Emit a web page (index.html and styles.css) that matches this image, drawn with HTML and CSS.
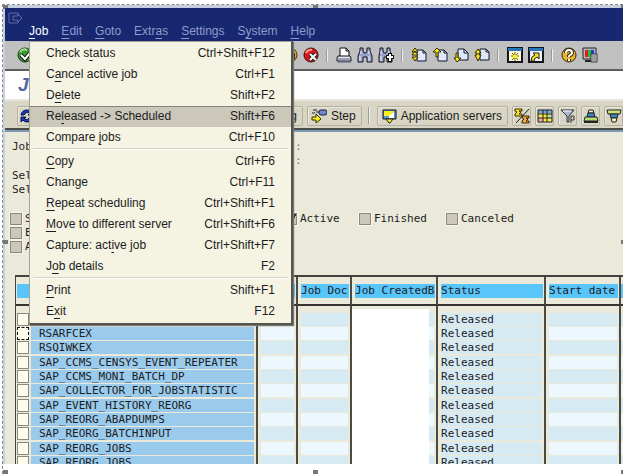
FILE: index.html
```
<!DOCTYPE html>
<html lang="en">
<head>
    <meta charset="utf-8">
    <title>Job Overview</title>
    <link rel="stylesheet" href="styles.css">
</head>
<body>
    <div class="window">
        <header class="titlebar">
            <svg class="sys-icon" viewBox="0 0 16 12"><path d="M10 3V1H1v10h9V9M5 4h5V2l4 4-4 4V8H5z" fill="none" stroke="#5c6ba6"/></svg>
            <nav class="menubar">
                <button class="open"><u>J</u>ob</button>
                <button><u>E</u>dit</button>
                <button><u>G</u>oto</button>
                <button>Extr<u>a</u>s</button>
                <button><u>S</u>ettings</button>
                <button>S<u>y</u>stem</button>
                <button><u>H</u>elp</button>
            </nav>
            <div class="menu">
                <button><span>Check s<u>t</u>atus</span><span>Ctrl+Shift+F12</span></button>
                <button><span>C<u>a</u>ncel active job</span><span>Ctrl+F1</span></button>
                <button><span>D<u>e</u>lete</span><span>Shift+F2</span></button>
                <button class="active"><span>Re<u>l</u>eased -&gt; Scheduled</span><span>Shift+F6</span></button>
                <button><span>Compare <u>j</u>obs</span><span>Ctrl+F10</span></button>
                <hr>
                <button><span><u>C</u>opy</span><span>Ctrl+F6</span></button>
                <button><span>Change</span><span>Ctrl+F11</span></button>
                <button><span><u>R</u>epeat scheduling</span><span>Ctrl+Shift+F1</span></button>
                <button><span><u>M</u>ove to different server</span><span>Ctrl+Shift+F6</span></button>
                <button><span>Capture: act<u>i</u>ve job</span><span>Ctrl+Shift+F7</span></button>
                <button><span>J<u>o</u>b details</span><span>F2</span></button>
                <hr>
                <button><span><u>P</u>rint</span><span>Shift+F1</span></button>
                <button><span>E<u>x</u>it</span><span>F12</span></button>
            </div>
        </header>

        <!-- standard toolbar -->
        <div class="toolbar">
            <button aria-label="Enter"><svg viewBox="0 0 16 16"><circle cx="8" cy="8" r="7" fill="#3a9a35" stroke="#16380f"/><path d="M3 5q3-4 7-2" stroke="#a8df94" stroke-width="2" fill="none"/><path d="M4 8l4 4 5-6" stroke="#111" stroke-width="4" fill="none"/><path d="M4 8l4 4 5-6" stroke="#fff" stroke-width="2" fill="none"/></svg></button>
            <input class="command" type="text" aria-label="Command">
            <button aria-label="Exit"><svg viewBox="0 0 16 16"><circle cx="8" cy="8" r="7" fill="#e8a020" stroke="#4a3208"/><path d="M4 12V7l4-3 4 3v5" fill="#fff3c0" stroke="#222" stroke-width="2"/></svg></button>
            <button aria-label="Cancel"><svg viewBox="0 0 16 16"><circle cx="8" cy="8" r="7" fill="#d81818" stroke="#4d0808"/><path d="M3 6q2-4 6-3" stroke="#ff9a88" stroke-width="2" fill="none"/><path d="M7 7l6 6m0-6l-6 6" stroke="#222" stroke-width="4"/><path d="M7 7l6 6m0-6l-6 6" stroke="#fff" stroke-width="2"/></svg></button>
            <i class="sep"></i>
            <button aria-label="Print"><svg viewBox="0 0 16 16"><path d="M4 9V1h6l3 3v5" fill="#fff" stroke="#111"/><path d="M10 1v3h3" fill="none" stroke="#111"/><path d="M2 9h12l1 2v3H1v-3z" fill="#e7e7ee" stroke="#111"/><path d="M2 12h12M2 15h13" stroke="#555b88"/></svg></button>
            <button aria-label="Find"><svg viewBox="0 0 16 16"><path d="M3 1h3v3l1 2h2l1-2V1h3v3l2 5v6h-5v-5H6v5H1V9l2-5z" fill="#9aa3c9" stroke="#15151f"/><path d="M4 4v3M3 9v5M12 4v3M12 9v5" stroke="#f2f4ff"/></svg></button>
            <button aria-label="Find next"><svg viewBox="0 0 16 16"><path d="M2 1h3v3l1 2h2l1-2V1h3v3l2 5v6H9v-5H6v5H1V9l1-5z" fill="#9aa3c9" stroke="#15151f"/><path d="M3 4v3M3 9v5M11 4v3" stroke="#f2f4ff"/><path d="M12 6v9M8 10h8" stroke="#111" stroke-width="4"/><path d="M12 7v7M9 10h6" stroke="#fff" stroke-width="2"/></svg></button>
            <i class="sep"></i>
            <button aria-label="First page"><svg viewBox="0 0 16 16"><path d="M6 3h6l3 3v8H6z" fill="#dfe8fb" stroke="#10162c"/><path d="M12 3v3h3" fill="none" stroke="#10162c"/><path d="M4 1l3 4H1zM4 4l3 4H1zM4 14l3-4H1z" fill="#f7e51c" stroke="#332c00"/></svg></button>
            <button aria-label="Previous page"><svg viewBox="0 0 16 16"><path d="M6 3h6l3 3v8H6z" fill="#dfe8fb" stroke="#10162c"/><path d="M12 3v3h3" fill="none" stroke="#10162c"/><path d="M5 1l4 4H6v5H4V5H1z" fill="#f7e51c" stroke="#332c00"/></svg></button>
            <button aria-label="Next page"><svg viewBox="0 0 16 16"><path d="M5 2h6l4 4v7H5z" fill="#dfe8fb" stroke="#10162c"/><path d="M11 2v4h4" fill="none" stroke="#10162c"/><path d="M4 15l4-4H5V6H3v5H1z" fill="#f7e51c" stroke="#332c00"/></svg></button>
            <button aria-label="Last page"><svg viewBox="0 0 16 16"><path d="M6 2h6l3 3v8H6z" fill="#dfe8fb" stroke="#10162c"/><path d="M12 2v3h3" fill="none" stroke="#10162c"/><path d="M4 2l3 4H5v2h2l-3 6-3-6h2V6H1z" fill="#f7e51c" stroke="#332c00"/></svg></button>
            <i class="sep"></i>
            <button aria-label="New session"><svg viewBox="0 0 16 16"><path d="M1 1h14v14H1z" fill="#fdfbd8" stroke="#15151f" stroke-width="2"/><path d="M1 1h14v3H1z" fill="#2577b8"/><path d="M8 5v9M4 9h8M5 6l6 7M11 6l-6 7" stroke="#6b6400"/><path d="M6 8h4v3H6z" fill="#ffee20"/></svg></button>
            <button aria-label="Create shortcut"><svg viewBox="0 0 16 16"><path d="M1 1h14v14H1z" fill="#eef1f8" stroke="#15151f" stroke-width="2"/><path d="M1 1h14v3H1z" fill="#2577b8"/><path d="M3 14q0-5 4-6L5 6h6v6L9 10q-3 1-3 4z" fill="#f7e51c" stroke="#222"/></svg></button>
            <i class="sep"></i>
            <button aria-label="Help"><svg viewBox="0 0 16 16"><circle cx="8" cy="8" r="7" fill="#e9b52c" stroke="#3a2c08"/><path d="M5 6q0-3 3-3t3 3q0 1-3 3v1M8 12v2" stroke="#3a2c08" stroke-width="4" fill="none"/><path d="M5 6q0-3 3-3t3 3q0 1-3 3v1M8 12v2" stroke="#fff" stroke-width="2" fill="none"/></svg></button>
            <button aria-label="Customize layout"><svg viewBox="0 0 16 16"><path d="M1 1h13v11H1z" fill="#b8b8c0" stroke="#222"/><path d="M3 3h3v7H3z" fill="#e01c1c"/><path d="M6 3h3v7H6z" fill="#1cc42c"/><path d="M9 3h3v7H9z" fill="#2438e0"/><path d="M3 14h6" stroke="#222" stroke-width="2"/><path d="M9 7h6v8H9z" fill="#e4e4e4" stroke="#333"/><path d="M10 9h4M10 11h4M10 13h4" stroke="#555"/></svg></button>
        </div>

        <h1>Job Overview</h1>

        <!-- application toolbar -->
        <div class="appbar">
            <div class="appbar-left">
                <button class="tool" aria-label="Refresh"><svg viewBox="0 0 16 16"><path d="M2 7q1-5 6-5 3 0 4 2l2-2v5H9l2-2q-4-2-6 2zM14 9q-1 5-6 5-3 0-4-2l-2 2V9h5l-2 2q4 2 6-2z" fill="#1b35b5" stroke="#0a1350"/></svg></button>
                <button class="tool">Job log</button>
            </div>
            <button class="tool"><svg viewBox="0 0 16 16"><rect x="8" y="2" width="8" height="5" rx="2" fill="#7087c9" stroke="#15203f"/><path d="M2 2h4M1 5h3M5 4h3" stroke="#222"/><path d="M1 9h4V6l5 5-5 4v-3H1z" fill="#f9ee1e" stroke="#332c00"/></svg>Step</button>
            <i class="sep"></i>
            <button class="tool"><svg viewBox="0 0 16 16"><path d="M2 2h13v9H2z" fill="#5d93d8" stroke="#111"/><path d="M3 3h10l-3 5H3z" fill="#f8ee24"/><path d="M8 8l5-4v6H8z" fill="#fff"/><path d="M5 11h7l-3 4H8z" fill="#f8ee24" stroke="#222"/></svg>Application servers</button>
            <button class="tool" aria-label="Subtotal"><svg viewBox="0 0 16 16"><path d="M1 1h7v2H5l2 1-2 2h3v2H1V6l2-2-2-1z" fill="#f5df2a" stroke="#3a3000"/><path d="M8 8h7v2h-3l2 1-2 2h3v2H8v-2l2-2-2-1z" fill="#f0b03a" stroke="#3a2000"/><path d="M15 1L2 15" stroke="#222"/></svg></button>
            <button class="tool" aria-label="Layout"><svg viewBox="0 0 16 16"><path d="M1 2h14v12H1z" fill="#f6e94c"/><path d="M1 2h14v3H1z" fill="#6fa9e4"/><path d="M1 10h5v4H1z" fill="#f0a8a0"/><path d="M10 5h5v5h-5z" fill="#bfe29a"/><path d="M1 2h14v12H1zM1 6h14M1 10h14M6 2v12M10 2v12" fill="none" stroke="#222"/></svg></button>
            <button class="tool" aria-label="Filter"><svg viewBox="0 0 16 16"><path d="M1 2h13L9 8v6H7V8z" fill="#aeb8d8" stroke="#333"/><path d="M3 3h8" stroke="#fff"/><path d="M11 15V8h3v4h-3" fill="none" stroke="#333"/></svg></button>
            <button class="tool" aria-label="Sort ascending"><svg viewBox="0 0 16 16"><path d="M6 2h4l1 3H5z" fill="#f6f0b0" stroke="#222"/><path d="M5 5h6l1 4H4z" fill="#3d86c8" stroke="#222"/><path d="M2 9h12l1 4H1z" fill="#b9dc7b" stroke="#222"/><path d="M1 14h14" stroke="#222" stroke-width="2"/></svg></button>
            <button class="tool" aria-label="Sort descending"><svg viewBox="0 0 16 16"><path d="M1 2h14l-1 4H2z" fill="#cce47a" stroke="#222"/><path d="M4 6h8l-1 4H5z" fill="#3d86c8" stroke="#222"/><path d="M5 10h6l-1 4H6z" fill="#f6f0b0" stroke="#222"/></svg></button>
        </div>

        <main>
            <div class="selection">
                <span>Job overview from</span><span class="colon">:</span>
                <span></span><span class="colon">:</span>
                <span>Selected job names</span><span></span>
                <span>Selected user names</span><span></span>
            </div>

            <div class="filters">
                <label><input type="checkbox">Scheduled</label>
                <label><input type="checkbox" checked>Active</label>
                <label><input type="checkbox">Finished</label>
                <label><input type="checkbox">Canceled</label>
                <label class="wide"><input type="checkbox">Event controlled</label>
                <label class="wide"><input type="checkbox">ABAP program</label>
            </div>

            <div class="list">
                <table>
                    <colgroup>
                        <col class="c-check"><col class="c-name"><col class="c-spool"><col class="c-doc"><col class="c-user"><col class="c-status"><col class="c-date"><col>
                    </colgroup>
                    <thead>
                        <tr><th class="name" colspan="2">JobName</th><th></th><th>Job Doc</th><th>Job CreatedB</th><th>Status</th><th>Start date</th><th></th></tr>
                    </thead>
                    <tbody>
                        <tr><td><input type="checkbox" aria-label="Select EU_PUT"></td><td>EU_PUT</td><td></td><td></td><td></td><td>Released</td><td></td><td></td></tr>
                        <tr><td><input class="focused" type="checkbox" aria-label="Select RSARFCEX"></td><td>RSARFCEX</td><td></td><td></td><td></td><td>Released</td><td></td><td></td></tr>
                        <tr><td><input type="checkbox" aria-label="Select RSQIWKEX"></td><td>RSQIWKEX</td><td></td><td></td><td></td><td>Released</td><td></td><td></td></tr>
                        <tr><td><input type="checkbox" aria-label="Select SAP_CCMS_CENSYS_EVENT_REPEATER"></td><td>SAP_CCMS_CENSYS_EVENT_REPEATER</td><td></td><td></td><td></td><td>Released</td><td></td><td></td></tr>
                        <tr><td><input type="checkbox" aria-label="Select SAP_CCMS_MONI_BATCH_DP"></td><td>SAP_CCMS_MONI_BATCH_DP</td><td></td><td></td><td></td><td>Released</td><td></td><td></td></tr>
                        <tr><td><input type="checkbox" aria-label="Select SAP_COLLECTOR_FOR_JOBSTATISTIC"></td><td>SAP_COLLECTOR_FOR_JOBSTATISTIC</td><td></td><td></td><td></td><td>Released</td><td></td><td></td></tr>
                        <tr><td><input type="checkbox" aria-label="Select SAP_EVENT_HISTORY_REORG"></td><td>SAP_EVENT_HISTORY_REORG</td><td></td><td></td><td></td><td>Released</td><td></td><td></td></tr>
                        <tr><td><input type="checkbox" aria-label="Select SAP_REORG_ABAPDUMPS"></td><td>SAP_REORG_ABAPDUMPS</td><td></td><td></td><td></td><td>Released</td><td></td><td></td></tr>
                        <tr><td><input type="checkbox" aria-label="Select SAP_REORG_BATCHINPUT"></td><td>SAP_REORG_BATCHINPUT</td><td></td><td></td><td></td><td>Released</td><td></td><td></td></tr>
                        <tr><td><input type="checkbox" aria-label="Select SAP_REORG_JOBS"></td><td>SAP_REORG_JOBS</td><td></td><td></td><td></td><td>Released</td><td></td><td></td></tr>
                        <tr><td><input type="checkbox" aria-label="Select SAP_REORG_JOBS"></td><td>SAP_REORG_JOBS</td><td></td><td></td><td></td><td>Released</td><td></td><td></td></tr>
                    </tbody>
                </table>
                <div class="blank"></div>
            </div>
        </main>
    </div>

    <!-- selection frame round the window -->
    <div class="frame">
        <i class="tl"></i><i class="tc"></i><i class="tr"></i>
        <i class="ml"></i><i class="mr"></i>
        <i class="bl"></i><i class="bc"></i><i class="br"></i>
    </div>
</body>
</html>
```
FILE: styles.css
```
* { box-sizing: border-box; }
body {
    margin: 0;
    height: 100vh;
    padding: 5px 0 10px 3px;
    overflow: hidden;
    background: white;
    color: #1c1c24;
    font: 12px/14px "Liberation Sans", Arial, sans-serif;
}
button {
    padding: 0;
    border: 0;
    background: none;
    color: inherit;
    font: inherit;
}
svg { display: block; flex: none; width: 16px; height: 16px; }
u { text-underline-offset: 3px; }
.window {
    display: flex;
    flex-direction: column;
    height: 100%;
    border-top: 3px solid #c5d0de;
    border-left: 2px solid #c5d0de;
}

/* title and menus */
.titlebar {
    position: relative;
    z-index: 2;
    flex: none;
    height: 33px;
    padding: 4px 0 0 3px;
    background: #172770;
}
.titlebar .sys-icon { height: 12px; }
.menubar {
    display: flex;
    gap: 13px;
    padding-left: 21px;
    color: #8f9ccb;
}
.menubar .open { color: white; }
.menu {
    position: absolute;
    top: 100%;
    left: 24px;
    width: 264px;
    padding: 1px 0;
    background: #f5f3e1;
    border: 1px solid #a5a397;
    border-right: 2px solid #55554d;
    border-bottom: 2px solid #55554d;
    box-shadow: 1px 1px 1px #777;
}
.menu button {
    display: flex;
    justify-content: space-between;
    width: 100%;
    padding: 3px 16px 4px;
    border-top: 1px solid transparent;
    line-height: 13px;
}
.menu .active {
    background: #cbc8b9;
    border-top-color: #85837a;
}
.menu hr {
    height: 2px;
    margin: 0 3px 1px;
    border: 0;
    border-top: 1px solid #d3d0c3;
    background: white;
}

/* toolbars */
.toolbar {
    display: flex;
    flex: none;
    align-items: center;
    gap: 5px;
    height: 30px;
    padding-left: 12px;
    background: #c0c0c0;
    border-bottom: 2px solid #5d5d5d;
}
.command {
    flex: none;
    width: 239px;
    height: 20px;
    border: 1px solid #888;
}
.sep {
    flex: none;
    width: 1px;
    height: 13px;
    margin: 0 3px;
    background: #eee;
    box-shadow: -1px 0 #999;
}
h1 {
    flex: none;
    margin: 0;
    padding-left: 13px;
    background: white;
    color: #5068a4;
    font: italic bold 19px/28px "Liberation Sans", Arial, sans-serif;
}
.appbar {
    display: flex;
    flex: none;
    align-items: center;
    gap: 4px;
    height: 33px;
    padding-left: 12px;
    background: #d8d5c4;
    border-top: 2px solid #e8e6dc;
    border-bottom: 2px solid #7d98b2;
    box-shadow: inset 0 -2px #4b4b45;
}
.appbar-left {
    display: flex;
    flex: none;
    justify-content: space-between;
    width: 286px;
}
.tool {
    display: flex;
    flex: none;
    align-items: center;
    gap: 4px;
    height: 20px;
    padding: 0 1px;
    border: 1px solid #b4b1a1;
    border-radius: 2px;
    box-shadow: inset 1px 1px #e9e7dc;
}
.tool:not([aria-label]) { padding: 0 5px 0 3px; }
.tool[aria-label] { width: 19px; }
.appbar .sep { height: 17px; }

/* job list */
main {
    flex: 1;
    min-height: 0;
    display: flex;
    flex-direction: column;
    padding-left: 5px;
    background: #ebe9d9;
    font: 11px/14px "DejaVu Sans Mono", monospace;
}
input[type="checkbox"] {
    appearance: none;
    display: block;
    flex: none;
    width: 12px;
    height: 12px;
    margin: 0;
    border: 1px solid #8b897d;
}
.selection {
    display: grid;
    grid-template-columns: 283px auto;
    grid-template-rows: 14px 15px 14px 14px;
    padding: 8px 0 0 2px;
}
.colon { color: #68788e; }
.filters {
    display: grid;
    grid-template-columns: 275px 74px 87px auto;
    padding-top: 15px;
}
.filters label {
    display: flex;
    align-items: center;
    gap: 3px;
}
.filters .wide { grid-column: 1 / -1; }
.filters input {
    background: #cbc8b9;
    outline: 1px solid #f6f5ec;
}
.filters input:checked {
    background: linear-gradient(135deg, transparent 45%, #333 45% 60%, transparent 60%) #cbc8b9;
}
.list {
    position: relative;
    flex: 1;
    min-height: 0;
    margin-top: 21px;
    margin-left: 5px;
    overflow: hidden;
    border-top: 2px solid #44443e;
    border-left: 1px solid #44443e;
}
table {
    width: 100%;
    table-layout: fixed;
    border-spacing: 0;
    white-space: nowrap;
}
.c-check { width: 14px; }
.c-name { width: 228px; }
.c-spool { width: 40px; }
.c-doc { width: 54px; }
.c-user { width: 86px; }
.c-status { width: 108px; }
.c-date { width: 75px; }
th, td {
    overflow: hidden;
    background-clip: content-box;
    border-right: 2px solid #4b4b45;
    text-align: left;
}
th {
    height: 29px;
    padding: 7px 1px 6px 3px;
    background-color: #58c5fb;
    border-bottom: 2px solid #33332f;
    font-weight: normal;
}
th.name {
    padding-left: 1px;
    text-indent: 22px;
}
td {
    height: 14px;
    padding: 0 2px 1px 3px;
    background-color: #d6eaf3;
    line-height: 13px;
}
tr:nth-child(3n) td { padding-bottom: 2px; }
tbody tr:first-child td { padding-top: 7px; }
tr:nth-child(even) td { background-color: #ecf8fe; }
tbody tr td:nth-child(6) { background-color: #d6eaf3; }
tbody tr td:nth-child(2) {
    padding-left: 1px;
    background-color: #9acbed;
    text-indent: 8px;
}
tbody tr td:first-child {
    padding-left: 1px;
    padding-right: 0;
    border-right: 0;
    background: none;
}
tr th:last-child, tr td:last-child {
    padding-left: 0;
    padding-right: 0;
    border-right: 0;
}
td input[type="checkbox"] {
    height: 13px;
    background: #fefdec;
}
td .focused[type="checkbox"] { border: 1px dashed #111; }
.blank {
    position: absolute;
    top: 32px;
    bottom: 0;
    left: 336px;
    width: 77px;
    background: white;
}

/* dashed frame and its handles */
.frame {
    position: absolute;
    inset: 4px 0 0 2px;
    border-top: 1px dashed #888;
    border-left: 1px dashed #888;
    pointer-events: none;
}
.frame i {
    position: absolute;
    width: 5px;
    height: 4px;
    background: #777;
}
.frame .tl, .frame .ml, .frame .bl { left: 0; }
.frame .tc, .frame .bc { left: 50%; }
.frame .tr, .frame .mr, .frame .br { right: 0; width: 2px; }
.frame .tl, .frame .tc, .frame .tr { top: 0; }
.frame .ml, .frame .mr { top: 50%; }
.frame .bl, .frame .bc, .frame .br { bottom: 0; }
```
